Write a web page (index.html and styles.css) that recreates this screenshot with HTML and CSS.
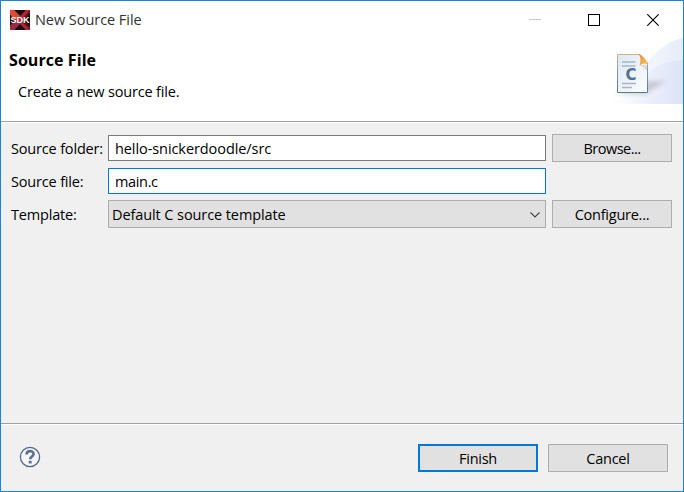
FILE: index.html
```html
<!DOCTYPE html>
<html lang="en">
<head>
<meta charset="utf-8">
<title>New Source File</title>
<link rel="stylesheet" href="styles.css">
</head>
<body>
<div class="window">
  <header class="titlebar">
    <svg class="app-icon" width="20" height="20" viewBox="0 0 20 20">
      <rect width="20" height="20" fill="#160b0d"/>
      <path d="M0 0H4L10 6L16 0H20V3L14 10L20 17V20H16L10 14L4 20H0V16L5 10L0 4Z" fill="#b82232"/>
      <path d="M0 0H4L10 6L7 9H3L0 4Z" fill="#df493c"/>
      <path d="M0 20V16L4 12H8L10 14L4 20Z" fill="#982943"/>
      <path d="M12 9L20 0V20L12 12Z" fill="#160b0d" opacity=".55"/>
      <text x="0.6" y="13.4" class="app-text">SDK</text>
    </svg>
    <span class="title">New Source File</span>
    <div class="controls">
      <svg width="12" height="12"><path d="M0 5.5H12" stroke="#c8c8c8"/></svg>
      <svg width="12" height="12"><rect x=".5" y=".5" width="11" height="11" fill="none" stroke="#000"/></svg>
      <svg width="12" height="12"><path d="M.3.3L11.7 11.7M11.7.3L.3 11.7" stroke="#000" stroke-width="1.1"/></svg>
    </div>
  </header>
  <section class="banner">
    <div class="intro">
      <h1>Source File</h1>
      <p>Create a new source file.</p>
    </div>
    <svg class="art" width="75" height="66" viewBox="608 38 75 66">
      <defs>
        <linearGradient id="sky" x1="0" x2="1"><stop offset="0" stop-color="#fff"/><stop offset=".5" stop-color="#f3f6fd"/><stop offset="1" stop-color="#e6ecf9"/></linearGradient>
        <linearGradient id="hill" x1="0" x2="1"><stop offset="0" stop-color="#e9edf9" stop-opacity="0"/><stop offset="1" stop-color="#dce4f6"/></linearGradient>
        <linearGradient id="paper" x1="0" x2="1" y2="1"><stop offset="0" stop-color="#dde8f2"/><stop offset="1" stop-color="#fcfdff"/></linearGradient>
        <linearGradient id="edge" x1="0" y1="0" x2="0" y2="1"><stop offset="0" stop-color="#d5b38a"/><stop offset=".45" stop-color="#84949c"/><stop offset="1" stop-color="#568087"/></linearGradient>
        <linearGradient id="fold" x2="1" y2="1"><stop offset="0" stop-color="#dc8b24"/><stop offset="1" stop-color="#ffc66e"/></linearGradient>
        <filter id="soft" x="-50%" y="-50%" width="200%" height="200%"><feGaussianBlur stdDeviation="2"/></filter>
      </defs>
      <path d="M610 104C634 95 645 45 683 38V104Z" fill="url(#sky)"/>
      <path d="M622 104C639 82 650 61 683 60V104Z" fill="url(#hill)"/>
      <path d="M614 94L646 94L666 81L648 81Z" fill="#aaa5b6" opacity=".5" filter="url(#soft)"/>
      <path d="M617.5 54.5H639.5L647.5 63V92.5H617.5Z" fill="url(#paper)" stroke="url(#edge)"/>
      <path d="M640 65L647 65V71Z" fill="#c3ccd4" opacity=".6"/>
      <path d="M638.5 54C642 54.5 648 61 647.7 65C645 62.8 643 63 639.5 65.5C641 61 641 57 638.5 54Z" fill="url(#fold)"/>
      <path d="M622 62H635.5M622 66H635.5M622 83.5H636M622 87.5H632" stroke="#a9b4ca" stroke-width="1.3"/>
      <text x="625.5" y="80" class="art-text">C</text>
    </svg>
  </section>
  <main class="form">
    <span class="label">Source folder:</span>
    <div class="field">hello-snickerdoodle/src</div>
    <div class="button browse">Browse...</div>
    <span class="label">Source file:</span>
    <div class="field active">main.c</div>
    <div></div>
    <span class="label">Template:</span>
    <div class="combo">Default C source template
      <svg width="10" height="6"><path d="M.5.5L5 5L9.5.5" fill="none" stroke="#444" stroke-width="1.1"/></svg>
    </div>
    <div class="button">Configure...</div>
  </main>
  <footer class="footer">
    <svg class="help" width="22" height="22" viewBox="0 0 22 22">
      <circle cx="11" cy="11" r="9.6" fill="#f5f6f8" stroke="#566884" stroke-width="1.3"/>
      <path d="M7.6 8.4C7.6 3.8 14.5 4.2 14.5 7.9C14.5 10.5 11.2 10.5 11.2 13.2" fill="none" stroke="#60718f" stroke-width="2.7"/>
      <rect x="9.7" y="14.8" width="3" height="2.8" rx=".6" fill="#60718f"/>
    </svg>
    <div class="button primary">Finish</div>
    <div class="button">Cancel</div>
  </footer>
</div>
</body>
</html>
```
FILE: styles.css
```css
* { box-sizing: border-box; }
body { margin: 0; font: 14.5px/20px "Open Sans", "Noto Sans", sans-serif; color: #000; }
svg { display: block; }
.window { width: 684px; height: 492px; border: 1px solid #1883d7; background: #f0f0f0; display: flex; flex-direction: column; overflow: hidden; white-space: nowrap; }
.titlebar { height: 37px; flex: none; background: #fff; display: flex; align-items: center; padding: 0 24px 0 9px; }
.app-icon { overflow: visible; }
.app-text { font: bold 9px "Liberation Sans", sans-serif; fill: #fff; }
.title { margin-left: 5px; color: #333; letter-spacing: -.05px; }
.controls { margin-left: auto; display: flex; gap: 47px; }
.banner { height: 83px; flex: none; background: #fff; display: flex; justify-content: space-between; }
.intro { padding: 12px 0 0 8px; }
h1 { margin: 0; font-size: 16px; line-height: 20px; font-weight: 700; letter-spacing: .07px; }
p { margin: 12px 0 0 9px; letter-spacing: -.17px; }
.art-text { font: bold 15px "DejaVu Sans", sans-serif; fill: #536f91; }
.form { height: 302px; flex: none; border-top: 1px solid #a0a0a0; box-shadow: inset 0 1px #fff; display: grid; grid-template-columns: 91px 438px 120px; grid-template-rows: 28px 26px 28px; column-gap: 6px; row-gap: 6px; padding: 12px 0 0 10px; align-items: center; }
.label { padding-top: 2px; letter-spacing: -.17px; }
.field { height: 26px; background: #fff; border: 1px solid #7a7a7a; padding: 3px 6px 1px; letter-spacing: -.08px; }
.field.active { border-color: #0078d7; letter-spacing: -.35px; }
.combo { height: 28px; background: #e1e1e1; border: 1px solid #adadad; display: flex; align-items: center; justify-content: space-between; padding: 1px 5px 0 3px; letter-spacing: -.09px; }
.button { width: 120px; height: 28px; border: 1px solid #adadad; background: #e1e1e1; display: flex; align-items: center; justify-content: center; padding-top: 2px; letter-spacing: -.25px; }
.button.browse { letter-spacing: -.5px; }
.button.primary { border: 2px solid #0078d7; }
.footer { flex: 1; border-top: 1px solid #a0a0a0; box-shadow: inset 0 1px #fff; display: flex; align-items: flex-start; gap: 10px; padding: 20px 15px 0 18px; }
.help { margin: 2px auto 0 0; }
```
